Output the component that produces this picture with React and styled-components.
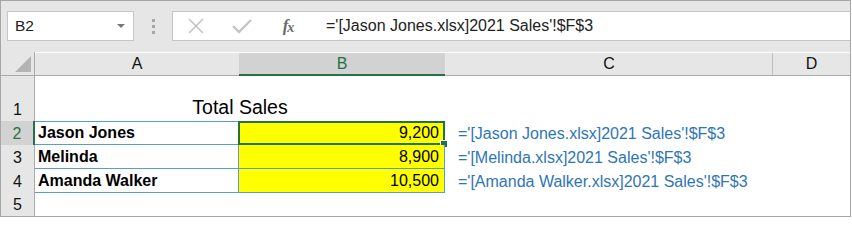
import React from "react";
import styled, { createGlobalStyle } from "styled-components";

const GREEN = "#217346";
const BLUE_LINE = "#5b9bd5";

const Global = createGlobalStyle`
  body {
    margin: 0;
    background: #ffffff;
    font-family: "Liberation Sans", Arial, sans-serif;
  }
`;

const Frame = styled.div`
  width: 851px;
  height: 217px;
  box-sizing: border-box;
  border: 1px solid #a6a6a6;
  background: #e6e6e6;
  display: flex;
  flex-direction: column;
  overflow: hidden;
`;

const FormulaBar = styled.div`
  height: 51px;
  display: flex;
  align-items: flex-start;
  padding-top: 10px;
  box-sizing: border-box;
  padding-left: 6px;
`;

const NameBox = styled.div`
  width: 127px;
  height: 30px;
  box-sizing: border-box;
  background: #fff;
  border: 1px solid #c6c6c6;
  display: flex;
  align-items: center;
  justify-content: space-between;
  padding: 0 8px 0 7px;
  font-size: 15.5px;
  color: #222;
`;

const Caret = styled.span`
  width: 0;
  height: 0;
  border-left: 4px solid transparent;
  border-right: 4px solid transparent;
  border-top: 4px solid #777;
`;

const Grip = styled.div`
  width: 38px;
  height: 30px;
  display: flex;
  flex-direction: column;
  align-items: center;
  justify-content: center;
  gap: 3px;
  span {
    width: 3px;
    height: 3px;
    background: #a6a6a6;
  }
`;

const FormulaBox = styled.div`
  flex: 1;
  height: 30px;
  box-sizing: border-box;
  background: #fff;
  border: 1px solid #c6c6c6;
  border-right: none;
  display: flex;
  align-items: center;
`;

const IconButton = styled.div`
  width: ${(p) => p.w}px;
  display: flex;
  justify-content: center;
  align-items: center;
`;

const Fx = styled.span`
  font-family: "Liberation Serif", "Times New Roman", serif;
  font-style: italic;
  font-weight: bold;
  font-size: 17px;
  color: #6b6b6b;
  letter-spacing: -1px;
  sub {
    font-size: 14px;
    vertical-align: -1px;
  }
`;

const FormulaText = styled.div`
  padding-left: 15px;
  font-size: 16px;
  color: #222;
  white-space: nowrap;
`;

const Sheet = styled.div`
  flex: 1;
  display: grid;
  grid-template-columns: 34px 204px 206px 328px 1fr;
  grid-template-rows: 24px 45px 24px 24px 24px 1fr;
  background: #fff;
`;

const Corner = styled.div`
  background: #e6e6e6;
  border-right: 1px solid #ababab;
  border-bottom: 1px solid #ababab;
  box-sizing: border-box;
  display: flex;
  align-items: flex-end;
  justify-content: flex-end;
  padding: 0 3px 3px 0;
  span {
    width: 0;
    height: 0;
    border-left: 16px solid transparent;
    border-bottom: 16px solid #b4b4b4;
  }
`;

const ColHeader = styled.div`
  box-sizing: border-box;
  background: ${(p) => (p.active ? "#d2d2d2" : "#e6e6e6")};
  border-bottom: ${(p) => (p.active ? `2px solid ${GREEN}` : "1px solid #ababab")};
  margin-top: 1px;
  display: flex;
  align-items: center;
  justify-content: center;
  font-size: 16px;
  color: ${(p) => (p.active ? GREEN : "#111")};
  position: relative;
  ${(p) =>
    p.sep &&
    `&::after { content: ""; position: absolute; right: 0; top: 0; bottom: 0; width: 1px; background: #bdbdbd; }`}
`;

const RowHeader = styled.div`
  box-sizing: border-box;
  background: ${(p) => (p.active ? "#d2d2d2" : "#e6e6e6")};
  border-right: ${(p) => (p.active ? `2px solid ${GREEN}` : "1px solid #ababab")};
  display: flex;
  align-items: flex-end;
  justify-content: center;
  padding-bottom: 2px;
  font-size: 16px;
  color: ${(p) => (p.active ? GREEN : "#111")};
`;

const Cell = styled.div`
  box-sizing: border-box;
  grid-column: ${(p) => p.span || "auto"};
  display: flex;
  align-items: flex-end;
  justify-content: ${(p) => (p.align === "right" ? "flex-end" : p.align === "center" ? "center" : "flex-start")};
  padding: 0 ${(p) => (p.align === "right" ? 5 : 3)}px 2px ${(p) => p.indent || 3}px;
  font-size: ${(p) => p.size || 16}px;
  font-weight: ${(p) => (p.bold ? 700 : 400)};
  color: ${(p) => p.color || "#000"};
  background: ${(p) => p.fill || "transparent"};
  white-space: nowrap;
  border-top: ${(p) => (p.top ? `1px solid ${BLUE_LINE}` : "none")};
  border-bottom: ${(p) => (p.boxed ? `1px solid ${BLUE_LINE}` : "none")};
  border-right: ${(p) => (p.boxed ? `1px solid ${BLUE_LINE}` : "none")};
  position: relative;
  ${(p) =>
    p.selected &&
    `
    &::before {
      content: "";
      position: absolute;
      left: -1px; top: -1px; right: -1px; bottom: -1px;
      border: 2px solid ${GREEN};
    }
    &::after {
      content: "";
      position: absolute;
      right: -4px; bottom: -4px;
      width: 6px; height: 6px;
      background: ${GREEN};
      border: 1px solid #fff;
    }
  `}
`;

const rows = [
  { n: 2, name: "Jason Jones", value: "9,200", file: "Jason Jones" },
  { n: 3, name: "Melinda", value: "8,900", file: "Melinda" },
  { n: 4, name: "Amanda Walker", value: "10,500", file: "Amanda Walker" },
];

const CrossIcon = () => (
  <svg width="18" height="16" viewBox="0 0 18 16">
    <path d="M2 1 L16 15 M16 1 L2 15" stroke="#c4c4c4" strokeWidth="1.6" fill="none" />
  </svg>
);

const CheckIcon = () => (
  <svg width="20" height="16" viewBox="0 0 20 16">
    <path d="M1 8 L7 14 L19 2" stroke="#c4c4c4" strokeWidth="2.4" fill="none" />
  </svg>
);

export default function App() {
  return (
    <>
      <Global />
      <Frame>
        <FormulaBar>
          <NameBox>
            B2
            <Caret />
          </NameBox>
          <Grip>
            <span />
            <span />
            <span />
          </Grip>
          <FormulaBox>
            <IconButton w={46}>
              <CrossIcon />
            </IconButton>
            <IconButton w={46}>
              <CheckIcon />
            </IconButton>
            <IconButton w={46}>
              <Fx>
                f<sub>x</sub>
              </Fx>
            </IconButton>
            <FormulaText>='[Jason Jones.xlsx]2021 Sales'!$F$3</FormulaText>
          </FormulaBox>
        </FormulaBar>
        <Sheet>
          <Corner>
            <span />
          </Corner>
          <ColHeader>A</ColHeader>
          <ColHeader active>B</ColHeader>
          <ColHeader sep>C</ColHeader>
          <ColHeader>D</ColHeader>

          <RowHeader>1</RowHeader>
          <Cell span="span 2" align="center" size={19.5}>
            Total Sales
          </Cell>
          <Cell />
          <Cell />

          {rows.map((r, i) => (
            <React.Fragment key={r.n}>
              <RowHeader active={r.n === 2}>{r.n}</RowHeader>
              <Cell bold boxed top={i === 0}>
                {r.name}
              </Cell>
              <Cell boxed top={i === 0} fill="#ffff00" align="right" selected={r.n === 2}>
                {r.value}
              </Cell>
              <Cell indent={13} color="#2e75b6">
                ='[{r.file}.xlsx]2021 Sales'!$F$3
              </Cell>
              <Cell />
            </React.Fragment>
          ))}

          <RowHeader>5</RowHeader>
          <Cell />
          <Cell />
          <Cell />
          <Cell />
        </Sheet>
      </Frame>
    </>
  );
}
